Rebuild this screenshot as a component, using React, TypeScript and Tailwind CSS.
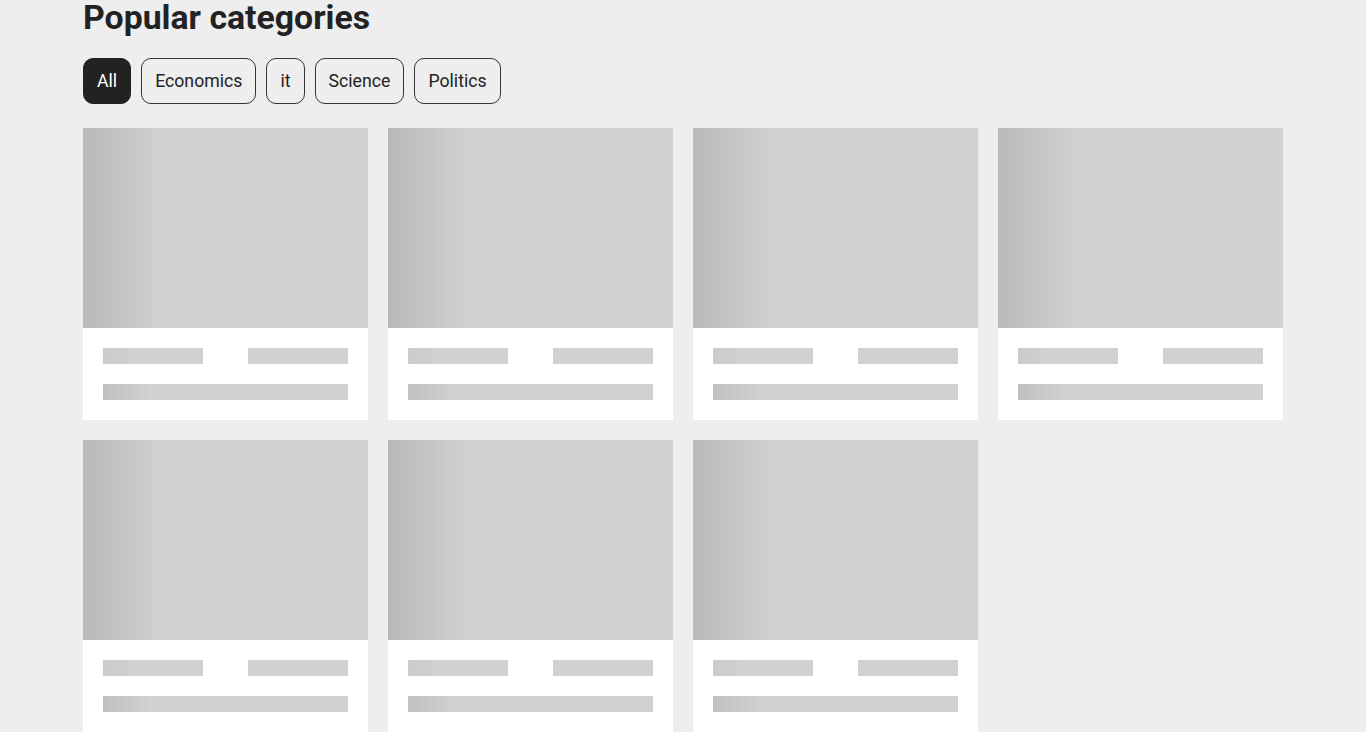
const categories = ['All', 'Economics', 'it', 'Science', 'Politics'];

const SkeletonCard = () => (
  <div className="bg-white">
    <div className="h-[200px] bg-[linear-gradient(90deg,#b9b9b9_0px,#d1d1d1_78px)]" />
    <div className="flex flex-col gap-5 p-5">
      <div className="flex justify-between">
        <div className="h-4 w-[100px] bg-[linear-gradient(90deg,#cbcbcb_0px,#d1d1d1_30px)]" />
        <div className="h-4 w-[100px] bg-[#d1d1d1]" />
      </div>
      <div className="h-4 w-full bg-[linear-gradient(90deg,#c0c0c0_0px,#d1d1d1_48px)]" />
    </div>
  </div>
);

const App = () => {
  return (
    <main className="min-h-screen bg-[#eeeeee] font-['Roboto',sans-serif] text-[#222]">
      <div className="mx-auto w-[1200px]">
        <h1 className="-mt-[4px] text-[33.8px] font-bold leading-[44px] text-[#222]">Popular categories</h1>

        <div className="mt-[18px] flex gap-[10px]">
          {categories.map((c, i) => (
            <button
              key={c}
              className={
                i === 0
                  ? 'h-[46px] rounded-[10px] border border-[#222] bg-[#222] px-[13px] text-[17.7px] text-white'
                  : 'h-[46px] rounded-[10px] border border-[#333] bg-transparent px-[13px] text-[17.7px] text-[#222]'
              }
            >
              {c}
            </button>
          ))}
        </div>

        <div className="mt-6 grid grid-cols-4 gap-5 pb-10">
          {Array.from({ length: 7 }).map((_, i) => (
            <SkeletonCard key={i} />
          ))}
        </div>
      </div>
    </main>
  );
};

export default App;
